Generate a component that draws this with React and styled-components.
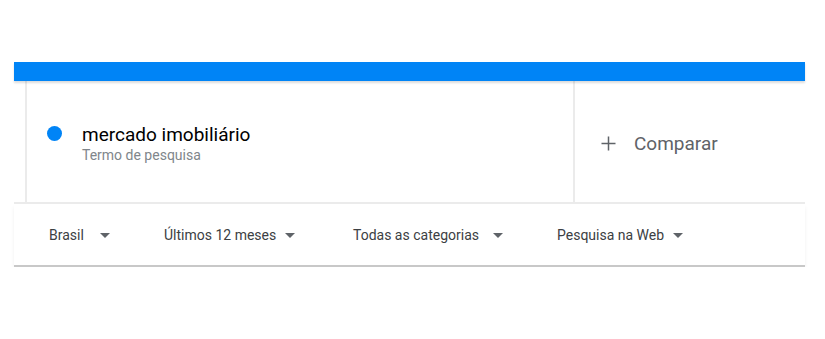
import React from "react";
import styled, { createGlobalStyle } from "styled-components";

const Global = createGlobalStyle`
  *, *::before, *::after {
    box-sizing: border-box;
  }
  body {
    margin: 0;
    background: #fff;
    font-family: Roboto, "Liberation Sans", Arial, sans-serif;
  }
`;

const Page = styled.div`
  padding: 62px 20px 0 14px;
`;

const Header = styled.div`
  height: 19px;
  background: #0084f6;
  box-shadow: 0 2px 2px rgba(0, 0, 0, 0.14);
  position: relative;
  z-index: 1;
`;

const TermRow = styled.div`
  display: flex;
  height: 123px;
  padding-left: 11px;
  border-bottom: 2px solid #ebebeb;
`;

const TermCard = styled.div`
  flex: 0 0 550px;
  display: flex;
  align-items: flex-start;
  padding: 44px 0 0 20px;
  border-left: 2px solid #ebebeb;
  border-right: 2px solid #ebebeb;
`;

const Dot = styled.span`
  width: 15px;
  height: 15px;
  border-radius: 50%;
  background: ${({ color }) => color};
  margin-top: 1px;
  flex: none;
`;

const TermText = styled.div`
  margin-left: 20px;
  display: flex;
  flex-direction: column;
`;

const TermName = styled.div`
  font-size: 19px;
  line-height: 20px;
  color: #000;
`;

const TermSub = styled.div`
  font-size: 14px;
  line-height: 16px;
  margin-top: 2px;
  color: #80868b;
`;

const Compare = styled.div`
  flex: 1;
  display: flex;
  align-items: center;
  padding: 4px 0 0 26px;
  color: #5f6368;
  font-size: 19px;
  gap: 18px;
`;

const FilterBar = styled.div`
  display: flex;
  align-items: center;
  height: 63px;
  padding: 1px 0 0 35px;
  border-bottom: 2px solid #c8c8c8;
  box-shadow: 0 3px 4px rgba(0, 0, 0, 0.06);
`;

const Dropdown = styled.div`
  display: flex;
  align-items: center;
  font-size: 14px;
  color: #3c4043;
  width: ${({ $width }) => $width};
`;

const Caret = styled.span`
  width: 0;
  height: 0;
  border-left: 5px solid transparent;
  border-right: 5px solid transparent;
  border-top: 5px solid #5f6368;
  margin-left: ${({ $gap }) => $gap}px;
  margin-top: 1px;
`;

const filters = [
  { label: "Brasil", gap: 16, width: "115px" },
  { label: "Últimos 12 meses", gap: 9, width: "189px" },
  { label: "Todas as categorias", gap: 14, width: "204px" },
  { label: "Pesquisa na Web", gap: 9, width: "auto" },
];

const PlusIcon = () => (
  <svg width="15" height="15" viewBox="0 0 15 15">
    <path d="M7.5 0.5v14M0.5 7.5h14" stroke="#5f6368" strokeWidth="1.5" />
  </svg>
);

export default function App() {
  return (
    <Page>
      <Global />
      <Header />
      <TermRow>
        <TermCard>
          <Dot color="#0084f6" />
          <TermText>
            <TermName>mercado imobiliário</TermName>
            <TermSub>Termo de pesquisa</TermSub>
          </TermText>
        </TermCard>
        <Compare>
          <PlusIcon />
          <span>Comparar</span>
        </Compare>
      </TermRow>
      <FilterBar>
        {filters.map((f) => (
          <Dropdown key={f.label} $width={f.width}>
            {f.label}
            <Caret $gap={f.gap} />
          </Dropdown>
        ))}
      </FilterBar>
    </Page>
  );
}
